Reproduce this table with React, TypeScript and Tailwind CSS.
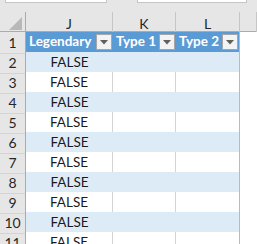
const cols = "grid grid-cols-[26px_87px_63px_64px_1fr]";

const FilterButton = () => (
    <span className="flex h-[16px] w-[16px] shrink-0 items-center justify-center border border-[#a6a6a6] bg-[#f3f3f3]">
        <svg width="8" height="5" viewBox="0 0 8 5">
            <path d="M0 0 L8 0 L4 4.5 Z" fill="#5f5f5f" />
        </svg>
    </span>
);

const HeaderCell = ({ label }: { label: string }) => (
    <div className="flex h-[20px] items-center justify-between pl-[3px] pr-[1px] text-[13.5px] font-bold text-white">
        <span className="whitespace-nowrap leading-none">{label}</span>
        <FilterButton />
    </div>
);

const rows = Array.from({ length: 11 }, (_, i) => i + 1);

const App = () => {
    return (
        <div className="h-[244px] w-[257px] overflow-hidden bg-[#e6e6e6] font-['Lato',sans-serif] text-[13.5px] text-[#1a1a1a]">
            {/* formula bar edges */}
            <div className="flex h-[12px] items-start">
                <div className="ml-[5px] h-[3px] w-[102px] border-x border-b border-[#c6c6c6] bg-white" />
                <div className="ml-[30px] h-[3px] w-[110px] border-x border-b border-[#c6c6c6] bg-white" />
            </div>

            {/* column letters */}
            <div className={`${cols} h-[20px] border-b border-[#ababab] text-[14px] text-[#262626]`}>
                <div className="relative border-r border-[#ababab]">
                    <svg className="absolute bottom-[4px] right-[3px]" width="13" height="13" viewBox="0 0 13 13">
                        <path d="M13 0 L13 13 L0 13 Z" fill="#b8b8b8" />
                    </svg>
                </div>
                <div className="flex items-center justify-center border-r border-[#c6c6c6] pt-[1px]">J</div>
                <div className="flex items-center justify-center border-r border-[#c6c6c6] pt-[1px]">K</div>
                <div className="flex items-center justify-center border-r border-[#c6c6c6] pt-[1px]">L</div>
                <div className="border-r border-[#c6c6c6]" />
            </div>

            {rows.map((n) => {
                const head = n === 1;
                const band = !head && n % 2 === 0;
                const fill = head ? "bg-[#5b9bd5]" : band ? "bg-[#ddebf7]" : "bg-white";
                const line = head ? "border-[#5b9bd5]" : "border-[#9bc2e6]";
                return (
                    <div key={n} className={`${cols} h-[20px]`}>
                        <div className="flex items-center justify-center border-r border-b border-r-[#ababab] border-b-[#d4d4d4] text-[14px] text-[#262626]">
                            {n}
                        </div>
                        {head ? (
                            <>
                                <div className={`${fill} border-b ${line}`}><HeaderCell label="Legendary" /></div>
                                <div className={`${fill} border-b ${line}`}><HeaderCell label="Type 1" /></div>
                                <div className={`${fill} border-b border-r ${line} border-r-[#9bc2e6]`}><HeaderCell label="Type 2" /></div>
                            </>
                        ) : (
                            <>
                                <div className={`${fill} flex items-center justify-center border-b ${line} ${band ? "" : "border-r border-r-[#d4d4d4]"}`}>
                                    FALSE
                                </div>
                                <div className={`${fill} border-b ${line} ${band ? "" : "border-r border-r-[#d4d4d4]"}`} />
                                <div className={`${fill} border-b border-r ${line} border-r-[#9bc2e6]`} />
                            </>
                        )}
                        <div className="border-b border-[#d4d4d4] bg-white" />
                    </div>
                );
            })}
        </div>
    );
};

export default App;
